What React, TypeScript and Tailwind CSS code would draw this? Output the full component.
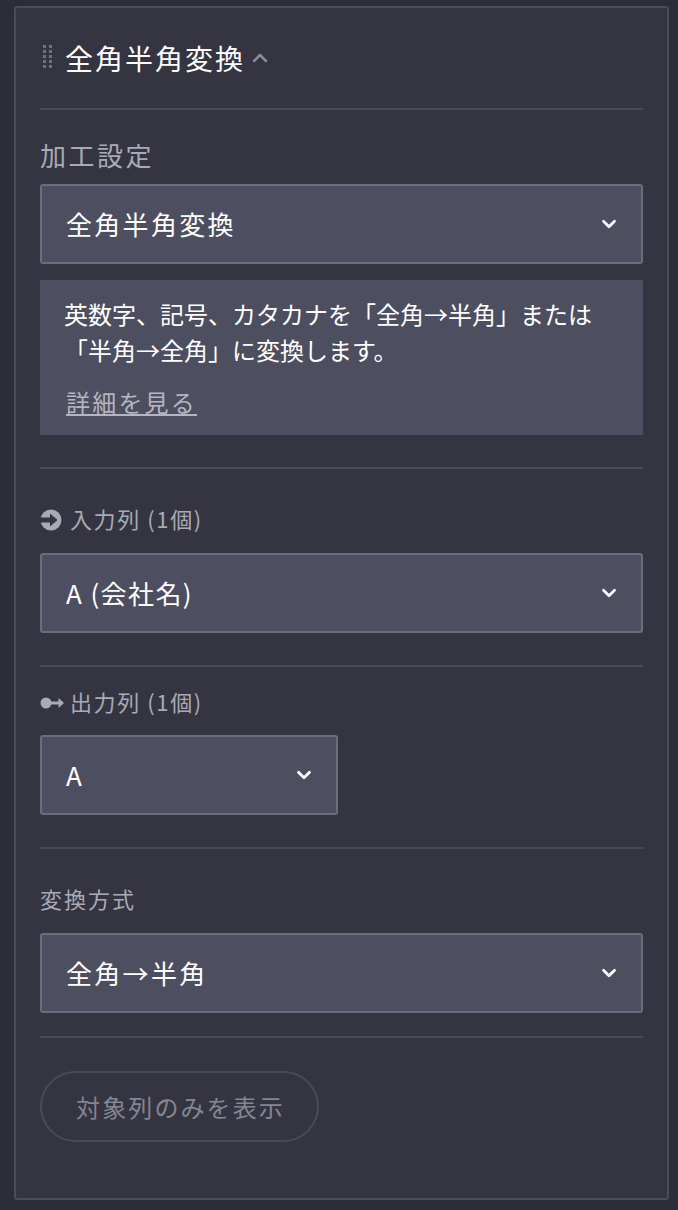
import { ChevronDown, ChevronUp } from "lucide-react";

const FONT = "font-['Noto_Sans_CJK_JP','Noto_Sans',sans-serif]";

function Select({ label, narrow = false, tight = false }: { label: string; narrow?: boolean; tight?: boolean }) {
  return (
    <div
      className={`flex h-[80px] items-center justify-between rounded-[3px] border-2 border-[#6c6d7c] bg-[#4d4e5f] pl-[24px] pr-[21px] ${narrow ? "w-[298px]" : "w-full"}`}
    >
      <span className={`text-[26px] leading-none text-white ${tight ? "tracking-[1.4px]" : "tracking-[2.3px]"}`}>{label}</span>
      <ChevronDown className="h-[22px] w-[22px] text-white" strokeWidth={3} />
    </div>
  );
}

function Divider({ className = "" }: { className?: string }) {
  return <div className={`h-[2px] w-full bg-[#4a4b5a] ${className}`} />;
}

function GripDots() {
  return (
    <svg width="12" height="26" viewBox="0 0 12 26" fill="#6f7080" className="ml-[2px] shrink-0">
      {[0, 5, 10, 15, 20].map((y) => (
        <g key={y}>
          <rect x="1" y={y} width="3" height="3" />
          <rect x="7" y={y} width="3" height="3" />
        </g>
      ))}
    </svg>
  );
}

function InputIcon() {
  return (
    <svg width="22" height="22" viewBox="0 0 22 22" className="mt-[4px] shrink-0">
      <circle cx="11" cy="11" r="10.5" fill="#a9aab6" />
      <path d="M0 8.5h10V4.5l7.5 6.5-7.5 6.5v-4H0z" fill="#343541" />
    </svg>
  );
}

function OutputIcon() {
  return (
    <svg width="24" height="14" viewBox="0 0 24 14" className="mt-[3px] shrink-0">
      <circle cx="6" cy="7" r="5.5" fill="#a9aab6" />
      <path d="M10 5.5h8.5V2l5.5 5-5.5 5V8.5H10z" fill="#a9aab6" />
    </svg>
  );
}

export default function App() {
  return (
    <div className={`h-[1210px] w-[678px] bg-[#2d2d37] pb-[10px] pl-[14px] pr-[9px] pt-[6px] ${FONT}`}>
      <div className="flex h-[1194px] flex-col rounded-[3px] border-2 border-[#4a4b5c] bg-[#343541] px-[24px]">
        <div className="flex h-[100px] shrink-0 items-center">
          <GripDots />
          <h2 className="ml-[11px] text-[28px] leading-none tracking-[2px] text-white">全角半角変換</h2>
          <ChevronUp className="ml-[3px] h-[24px] w-[24px] text-[#8b8c99]" strokeWidth={2.5} />
        </div>
        <Divider />

        <p className="mt-[28px] text-[26px] leading-[34px] tracking-[2.5px] text-[#a9aab6]">加工設定</p>
        <div className="mt-[12px]">
          <Select label="全角半角変換" />
        </div>
        <div className="mt-[16px] h-[155px] bg-[#4d4e5f] px-[24px] pt-[16px]">
          <p className="text-[24px] leading-[36px] text-white">
            英数字、記号、カタカナを「全角→半角」または
            <br />
            「半角→全角」に変換します。
          </p>
          <a className="ml-[2px] mt-[16px] block text-[24px] leading-[36px] tracking-[2.2px] text-[#b4b5c0] underline">詳細を見る</a>
        </div>
        <Divider className="mt-[32px]" />

        <div className="mt-[33px] flex h-[32px] items-center gap-[8px] text-[#a9aab6]">
          <InputIcon />
          <span className="text-[22px] leading-none tracking-[1.6px]">入力列 (1個)</span>
        </div>
        <div className="mt-[19px]">
          <Select label="A (会社名)" tight />
        </div>
        <Divider className="mt-[32px]" />

        <div className="mt-[18px] flex h-[32px] items-center gap-[6px] text-[#a9aab6]">
          <OutputIcon />
          <span className="text-[22px] leading-none tracking-[1.6px]">出力列 (1個)</span>
        </div>
        <div className="mt-[18px]">
          <Select label="A" narrow />
        </div>
        <Divider className="mt-[32px]" />

        <p className="mt-[33px] text-[22px] leading-[32px] tracking-[2px] text-[#a9aab6]">変換方式</p>
        <div className="mt-[19px]">
          <Select label="全角→半角" />
        </div>
        <Divider className="mt-[23px]" />

        <button
          type="button"
          className="mt-[33px] flex h-[71px] w-[279px] items-center justify-center rounded-full border-2 border-[#4a4b5a] pl-[2px] text-[24px] leading-none tracking-[2.1px] text-[#858693]"
        >
          対象列のみを表示
        </button>
      </div>
    </div>
  );
}
